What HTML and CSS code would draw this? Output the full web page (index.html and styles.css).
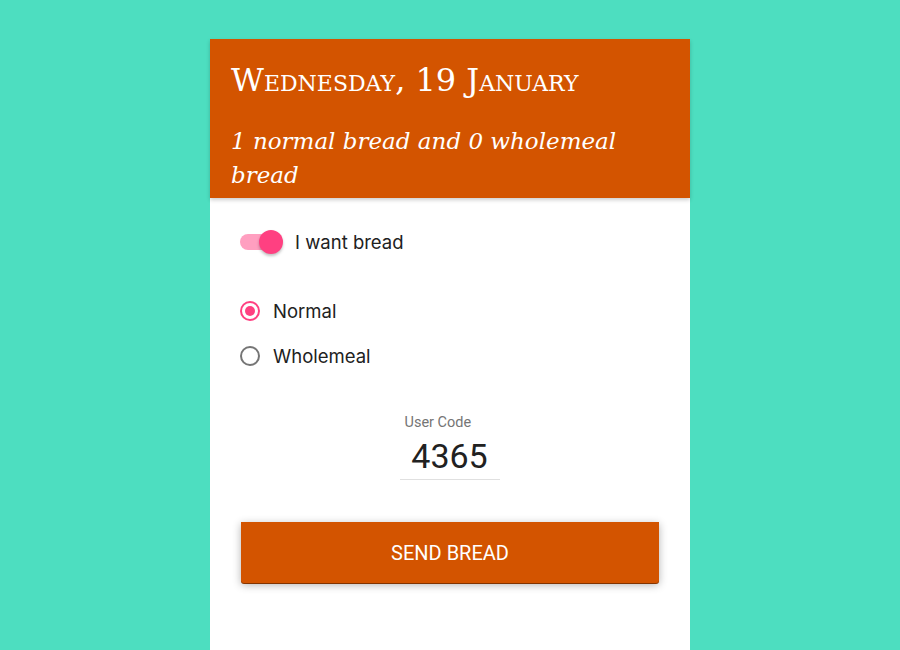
FILE: index.html
```html
<!DOCTYPE html>
<html>
<head>
<meta charset="utf-8">
<link rel="stylesheet" href="styles.css">
</head>
<body>
<div class="card">
  <div class="header">
    <h1 class="title">Wednesday, 19 January</h1>
    <p class="summary">1 normal bread and 0 wholemeal bread</p>
  </div>
  <div class="content">
    <div class="toggle-row">
      <span class="toggle"><span class="track"></span><span class="thumb"></span></span>
      <span class="toggle-label">I want bread</span>
    </div>
    <div class="radios">
      <div class="radio-row">
        <span class="radio checked"><span class="dot"></span></span>
        <span class="radio-label">Normal</span>
      </div>
      <div class="radio-row">
        <span class="radio"></span>
        <span class="radio-label">Wholemeal</span>
      </div>
    </div>
    <div class="field">
      <div class="field-inner">
        <label class="field-label">User Code</label>
        <div class="field-value">4365</div>
      </div>
    </div>
    <button class="send">SEND BREAD</button>
  </div>
</div>
</body>
</html>
```
FILE: styles.css
```css
html, body {
  margin: 0;
  padding: 0;
  background: #4ddec0;
  height: 100%;
  overflow: hidden;
}
.card {
  width: 480px;
  margin: 39px auto 0;
  background: #fff;
  min-height: 640px;
  font-family: Roboto, "Liberation Sans", sans-serif;
}
.header {
  background: #d35400;
  color: #fff;
  padding: 18px 21px 10px;
  height: 131px;
  box-shadow: 0 2px 4px rgba(0,0,0,0.2);
  position: relative;
}
.title {
  margin: 0;
  font-family: "DejaVu Serif", serif;
  font-weight: normal;
  font-variant: small-caps;
  font-size: 32px;
  line-height: 46px;
  letter-spacing: 0;
}
.summary {
  margin: 21px 0 0;
  font-family: "DejaVu Serif", serif;
  font-style: italic;
  font-size: 23px;
  line-height: 34px;
}
.content {
  padding: 32px 31px 0 30px;
}
.toggle-row {
  display: flex;
  align-items: center;
  height: 24px;
}
.toggle {
  position: relative;
  width: 44px;
  height: 24px;
  display: inline-block;
}
.track {
  position: absolute;
  left: 0;
  top: 4px;
  width: 36px;
  height: 16px;
  border-radius: 8px;
  background: #ff9fc0;
}
.thumb {
  position: absolute;
  left: 19px;
  top: 0;
  width: 24px;
  height: 24px;
  border-radius: 50%;
  background: #ff4081;
  box-shadow: 0 2px 3px rgba(0,0,0,0.25);
}
.toggle-label {
  margin-left: 11px;
  font-family: Inter, Roboto, sans-serif;
  font-size: 18.5px;
  color: #212121;
}
.radios {
  margin-top: 47px;
  display: flex;
  flex-direction: column;
  gap: 25px;
}
.radio-row {
  display: flex;
  align-items: center;
  height: 20px;
}
.radio {
  box-sizing: border-box;
  width: 20px;
  height: 20px;
  border-radius: 50%;
  border: 2px solid #757575;
  display: flex;
  align-items: center;
  justify-content: center;
}
.radio.checked {
  border-color: #ff4081;
}
.dot {
  width: 10px;
  height: 10px;
  border-radius: 50%;
  background: #ff4081;
}
.radio-label {
  margin-left: 13px;
  font-family: Inter, Roboto, sans-serif;
  font-size: 18.5px;
  color: #212121;
}
.field {
  display: flex;
  justify-content: center;
  margin-top: 49px;
}
.field-inner {
  width: 100px;
  border-bottom: 1px solid #e0e0e0;
}
.field-label {
  display: block;
  font-size: 14.5px;
  color: #757575;
  padding-left: 5px;
  line-height: 16px;
}
.field-value {
  text-align: center;
  font-size: 34px;
  line-height: 40px;
  color: #212121;
  padding-top: 5px;
  padding-bottom: 3px;
}
.send {
  display: block;
  width: 418px;
  height: 61px;
  margin: 42px 0 0 1px;
  border: none;
  border-radius: 0 0 3px 3px;
  background: #d35400;
  color: #fff;
  font-family: Roboto, "Liberation Sans", sans-serif;
  font-size: 20px;
  box-shadow: 0 2px 8px rgba(0,0,0,0.3), 0 1px 0 #a04000;
}
```
